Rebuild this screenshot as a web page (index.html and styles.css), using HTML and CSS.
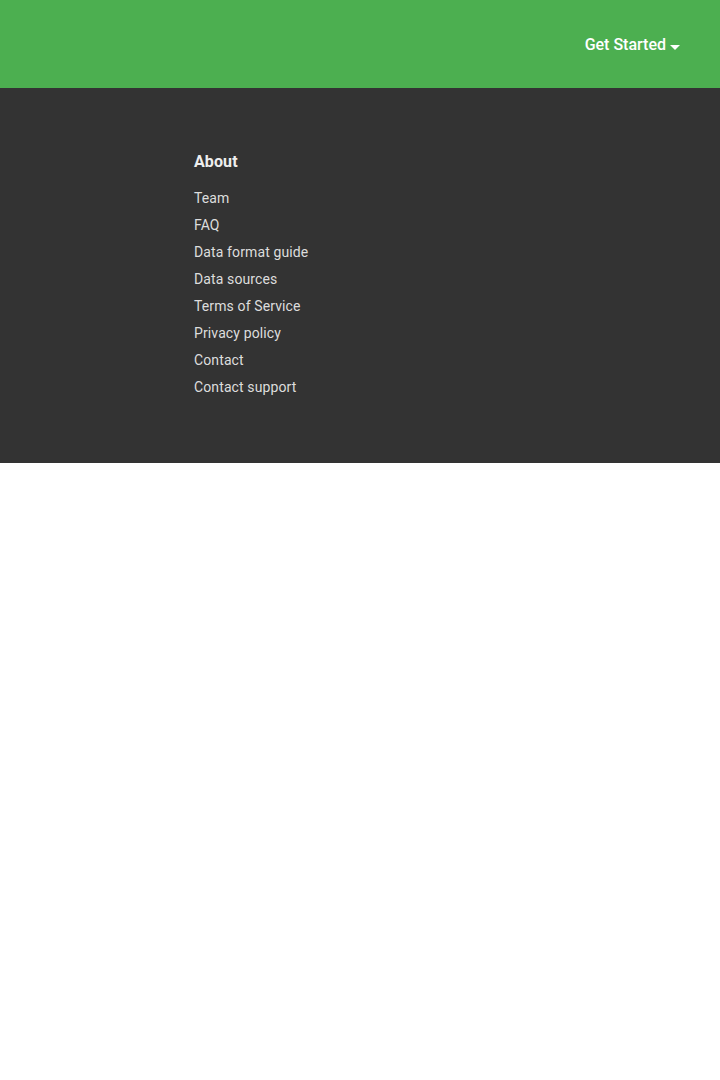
FILE: index.html
```html
<!DOCTYPE html>
<html>
<head>
<meta charset="utf-8">
<link rel="stylesheet" href="styles.css">
</head>
<body>
<header class="topbar">
  <a class="menu-toggle" href="#">Get Started <svg class="caret" width="10" height="5" viewBox="0 0 10 5"><path d="M0 0 L10 0 L5 5 Z" fill="#fff"/></svg></a>
</header>
<footer class="footer">
  <div class="col">
    <h3 class="col-title">About</h3>
    <ul class="links">
      <li><a href="#">Team</a></li>
      <li><a href="#">FAQ</a></li>
      <li><a href="#">Data format guide</a></li>
      <li><a href="#">Data sources</a></li>
      <li><a href="#">Terms of Service</a></li>
      <li><a href="#">Privacy policy</a></li>
      <li><a href="#">Contact</a></li>
      <li><a href="#">Contact support</a></li>
    </ul>
  </div>
</footer>
</body>
</html>
```
FILE: styles.css
```css
html, body { margin: 0; padding: 0; background: #fff; font-family: Roboto, "Liberation Sans", sans-serif; }
.topbar {
  height: 88px;
  background: #4caf50;
  display: flex;
  align-items: center;
  justify-content: flex-end;
  padding-right: 40px;
}
.menu-toggle {
  color: #fff;
  text-decoration: none;
  font-size: 16px;
  font-weight: 500;
  display: flex;
  align-items: center;
  gap: 4px;
  margin-top: 1px;
}
.caret { margin-top: 5px; }
.footer {
  background: #333;
  padding: 63px 0 62px 194px;
}
.col-title {
  margin: 0 0 12px;
  font-size: 16px;
  line-height: 22px;
  font-weight: 700;
  color: #eee;
  letter-spacing: 0.1px;
}
.links { list-style: none; margin: 0; padding: 0; }
.links li { line-height: 27px; font-size: 14px; letter-spacing: 0.12px; }
.links a { color: #ddd; text-decoration: none; }
```
